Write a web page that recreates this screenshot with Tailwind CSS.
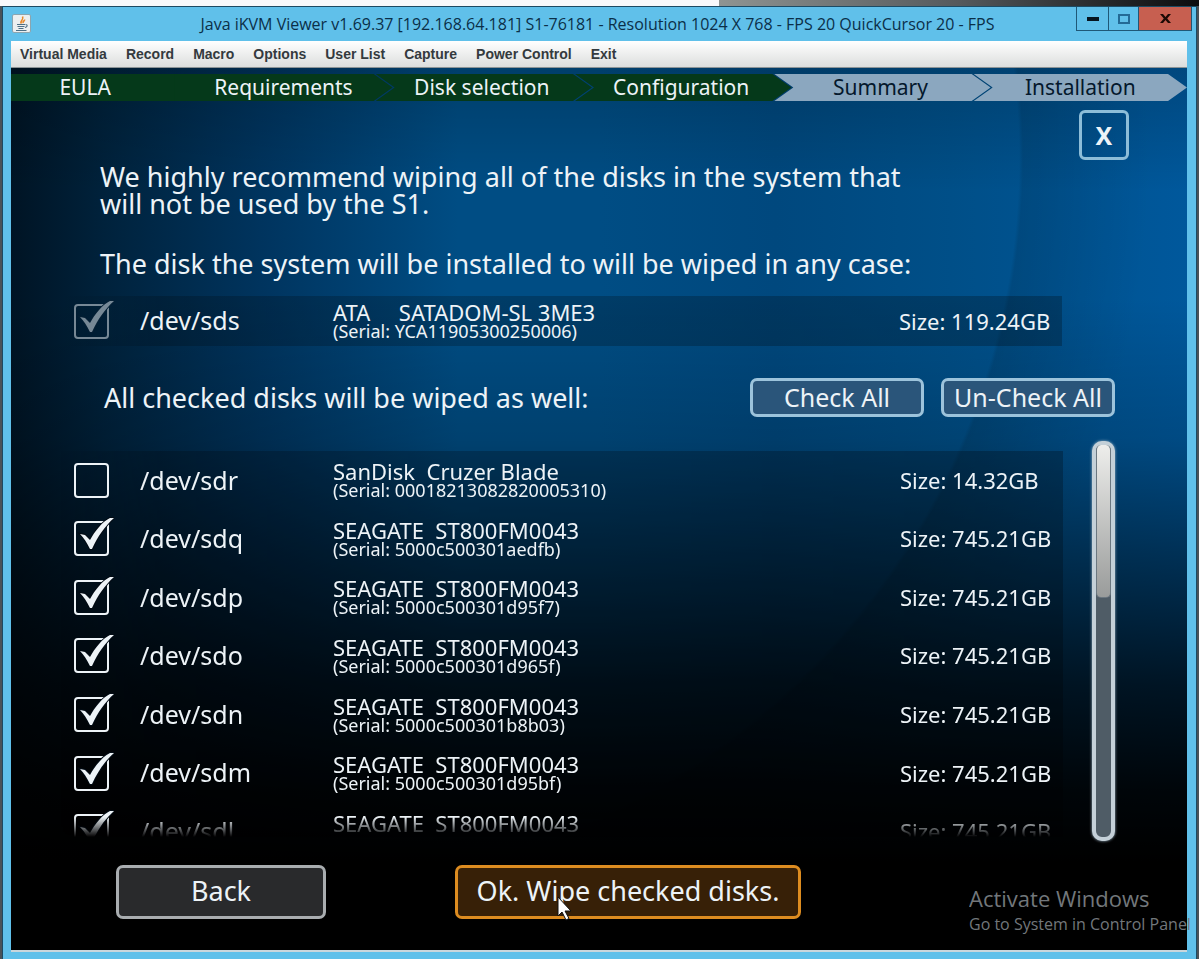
<!DOCTYPE html>
<html lang="en">
<head>
    <meta charset="UTF-8">
    <meta name="viewport" content="width=device-width, initial-scale=1.0">
    <title>Java iKVM Viewer</title>
    <script src="https://cdn.jsdelivr.net/npm/@tailwindcss/browser@4"></script>
</head>
<body class="flex min-h-screen flex-col overflow-hidden bg-[#4a5258] font-['Noto_Sans',sans-serif]">
    <!-- Desktop behind the window -->
    <div class="flex h-[6px] shrink-0">
        <div class="w-3/5 bg-[#f8f9fb]"></div>
        <div class="flex-1 bg-linear-to-r from-[#8f9492] via-[#55595c] to-[#0c0d0f]"></div>
    </div>

    <div class="relative ml-[2px] mr-[2px] flex flex-1 flex-col border-x border-t border-[#1c4a63] bg-[#60c0ea]">
        <!-- Title bar -->
        <header class="relative flex h-[34px] shrink-0 items-center justify-center pr-[4px]">
            <svg class="absolute left-[9px] top-[7px] size-[19px]" viewBox="0 0 19 19" aria-hidden="true">
                <rect x="0.5" y="0.5" width="18" height="18" rx="1.5" fill="#eceff0" stroke="#8ba5b0"/>
                <path d="M9.5 9.500c-2.500-2.500 3-3.500 1-7M11.500 9c-1.500-1.500 1.500-2 1-3.500" fill="none" stroke="#e8892b" stroke-width="1.600"/>
                <path d="M5 10.500h8M5.500 12.500h7M6.500 14.500h5M13.500 10.500c2.500 0 2 2.500-.5 3" fill="none" stroke="#4d6f85" stroke-width="1.100"/>
                <path d="M4 16.500h10.500" stroke="#4d6f85" stroke-width="1"/>
            </svg>
            <h1 class="whitespace-nowrap font-['Open_Sans',sans-serif] text-[16px] text-[#0b2f48]">Java iKVM Viewer v1.69.37 [192.168.64.181] S1-76181 - Resolution 1024 X 768 - FPS 20 QuickCursor 20 - FPS</h1>
            <div class="absolute right-[4px] top-0 flex h-[24px] border border-t-0 border-[#1f5877]">
                <button aria-label="Minimize" class="flex w-[31px] items-center justify-center">
                    <svg class="h-[4px] w-[12px]" viewBox="0 0 12 4"><rect width="12" height="4" fill="#06151f"/></svg>
                </button>
                <button aria-label="Maximize" class="flex w-[31px] items-center justify-center border-x border-[#1f5877]">
                    <svg class="h-[10px] w-[12px]" viewBox="0 0 12 10"><rect x="1" y="1" width="10" height="8" fill="none" stroke="#236a96" stroke-width="2"/></svg>
                </button>
                <button aria-label="Close" class="flex w-[52px] items-center justify-center bg-[#c75f50]">
                    <svg class="h-[9px] w-[11px]" viewBox="0 0 11 9"><path d="M0 0h3l2.500 3 2.500-3h3L7.200 4.500 11 9H8L5.500 6 3 9H0l3.800-4.500z" fill="#1c0a05"/></svg>
                </button>
            </div>
        </header>

        <div class="ml-[8px] mr-[9px] flex flex-1 flex-col">
            <!-- Menu -->
            <nav class="flex h-[27px] shrink-0 items-center gap-[19px] whitespace-nowrap border-b border-[#8d9496] bg-linear-to-b from-white to-[#dcdedd] px-[9px] font-['Liberation_Sans',sans-serif] text-[14px] font-bold text-[#343a3e]">
                <button>Virtual Media</button>
                <button>Record</button>
                <button>Macro</button>
                <button>Options</button>
                <button>User List</button>
                <button>Capture</button>
                <button>Power Control</button>
                <button>Exit</button>
            </nav>

            <!-- Remote screen -->
            <main class="relative flex flex-1 flex-col overflow-hidden bg-[linear-gradient(to_bottom,#00000030_0%,transparent_14%,transparent_26%,#00000028_42%,#00000078_56%,#000000c4_70%,#000000f0_82%,#000_90%),radial-gradient(circle_at_280px_90px,transparent_728px,#0000001c_732px,transparent_860px),linear-gradient(to_right,#001424_0%,#00223c_8%,#003560_22%,#004d84_38%,#004d84_50%,#00487e_65%,#004f88_80%,#00589c_100%)] pb-[31px] text-[#edf3f7]">
                <ol class="mt-[6px] grid h-[27px] shrink-0 grid-cols-[182fr_199fr_199fr_199fr_199fr_196fr] text-[21px] leading-[26px]">
                    <li class="bg-[#05391a] pr-[34px] text-center">EULA</li>
                    <li class="-ml-[19px] bg-[#05391a] text-center [clip-path:polygon(0_0,calc(100%-19px)_0,100%_50%,calc(100%-19px)_100%,0_100%)]">Requirements</li>
                    <li class="-ml-[17px] bg-[#05391a] pr-[4px] text-center [clip-path:polygon(0_0,calc(100%-19px)_0,100%_50%,calc(100%-19px)_100%,0_100%,19px_50%)]">Disk selection</li>
                    <li class="-ml-[17px] bg-[#05391a] pr-[4px] text-center [clip-path:polygon(0_0,calc(100%-19px)_0,100%_50%,calc(100%-19px)_100%,0_100%,19px_50%)]">Configuration</li>
                    <li class="-ml-[17px] bg-[#8ba7bf] pr-[4px] text-center text-[#04182c] [clip-path:polygon(0_0,calc(100%-19px)_0,100%_50%,calc(100%-19px)_100%,0_100%,19px_50%)]">Summary</li>
                    <li class="-ml-[17px] bg-[#8ba7bf] text-center text-[#04182c] [clip-path:polygon(0_0,calc(100%-19px)_0,100%_50%,calc(100%-19px)_100%,0_100%,19px_50%)]">Installation</li>
                </ol>

                <button class="mr-[58px] mt-[9px] size-[50px] self-end rounded-[6px] border-3 border-[#8dbdd8] text-[25px] font-bold leading-none">X</button>

                <section class="ml-[49px] mr-[72px] flex flex-col">
                    <p class="ml-[40px] mt-[3px] text-[27px] leading-[27px]">We highly recommend wiping all of the disks in the system that<br>will not be used by the S1.</p>
                    <p class="ml-[40px] mt-[33px] text-[27px] leading-[27px]">The disk the system will be installed to will be wiped in any case:</p>

                    <table class="mr-[53px] mt-[19px] h-[50px] table-fixed bg-linear-to-r from-transparent via-black/20 via-10% to-black/25 text-left">
                        <colgroup><col class="w-[80px]"><col class="w-[193px]"><col><col class="w-[163px]"></colgroup>
                        <tr>
                            <td class="pl-[14px]">
                                <label class="relative block size-[35px] opacity-50">
                                    <input type="checkbox" checked disabled aria-label="/dev/sds" class="peer block size-full appearance-none rounded-[4px] border-2 border-[#edf3f7]">
                                    <svg class="pointer-events-none absolute left-0 top-[-4px] hidden h-[39px] w-[40px] peer-checked:block" viewBox="0 0 40 39"><path d="M6 17 11 18 16 23C21 14 28 5 36 1L40 1C31 9 24 19 18 32H16C13 26 10 21 6 17z" fill="#edf3f7" stroke="#0a2236" stroke-width="2" paint-order="stroke"/></svg>
                                </label>
                            </td>
                            <td class="text-[25px]">/dev/sds</td>
                            <td><div class="whitespace-pre text-[22px] leading-[20px]">ATA     SATADOM-SL 3ME3</div><div class="text-[18px] leading-[18px]">(Serial: YCA11905300250006)</div></td>
                            <td class="text-[22px]">Size: 119.24GB</td>
                        </tr>
                    </table>

                    <div class="ml-[44px] mt-[32px] flex items-center gap-[17px]">
                        <p class="flex-1 text-[27px] leading-[27px]">All checked disks will be wiped as well:</p>
                        <button class="h-[39px] w-[174px] rounded-[7px] border-3 border-[#9cc3db] bg-[#2a557a] text-[25px] leading-none">Check All</button>
                        <button class="h-[39px] w-[174px] whitespace-nowrap rounded-[7px] border-3 border-[#9cc3db] bg-[#2a557a] text-[25px] leading-none">Un-Check All</button>
                    </div>

                    <div class="mt-[24px] flex h-[400px] justify-between">
                        <div class="mr-[29px] mt-[10px] h-[386px] flex-1 overflow-hidden bg-linear-to-r from-transparent via-black/20 via-10% to-black/25 [mask-image:linear-gradient(to_bottom,#000_calc(100%-20px),transparent)]">
                            <table id="disks" class="h-[410px] w-full table-fixed text-left">
                                <colgroup><col class="w-[80px]"><col class="w-[193px]"><col><col class="w-[163px]"></colgroup>
                                <tbody></tbody>
                            </table>
                        </div>
                        <div role="scrollbar" aria-controls="disks" aria-valuenow="0" class="w-[23px] rounded-[10px] border-4 border-[#c4d0d8] bg-[#4f5c66] shadow-[0_0_3px_#9fb8c8]">
                            <div class="h-[153px] rounded-[5px] border-x border-b border-[#6b7780] bg-linear-to-b from-[#eeeeec] to-[#9a9c9b]"></div>
                        </div>
                    </div>
                </section>

                <footer class="ml-[105px] mt-[24px] flex gap-[129px] text-[27px]">
                    <button class="h-[54px] w-[210px] rounded-[7px] border-3 border-[#a9adb0] bg-[#292a2c] pb-[4px] leading-none">Back</button>
                    <button class="h-[54px] w-[346px] whitespace-nowrap rounded-[7px] border-3 border-[#dd8c20] bg-[#372007] pb-[4px] leading-none">Ok. Wipe checked disks.</button>
                </footer>
            </main>
            <div class="mb-[7px] h-[2px] bg-[#c9d6dc]"></div>
        </div>

        <!-- Mouse pointer -->
        <svg class="pointer-events-none absolute left-[554px] top-[889px] h-[25px] w-[15px]" viewBox="0 0 15 25"><path d="M1 1v19l4-4 4 8 3-1.500-4-7.500h6z" fill="#fff" stroke="#111" stroke-width="1"/></svg>

        <!-- System watermark -->
        <div class="pointer-events-none absolute bottom-[23px] left-[966px] w-[222px] overflow-hidden whitespace-nowrap font-['Open_Sans',sans-serif] text-[#72777b]">
            <p class="text-[22px] leading-[28px]">Activate Windows</p>
            <p class="text-[16px] leading-[24px]">Go to System in Control Panel</p>
        </div>
    </div>

    <template id="diskRow">
        <tr>
            <td class="pl-[14px]">
                <label class="relative block size-[35px]">
                    <input type="checkbox" class="peer block size-full appearance-none rounded-[4px] border-2 border-[#edf3f7]">
                    <svg class="pointer-events-none absolute left-0 top-[-4px] hidden h-[39px] w-[40px] peer-checked:block" viewBox="0 0 40 39"><path d="M6 17 11 18 16 23C21 14 28 5 36 1L40 1C31 9 24 19 18 32H16C13 26 10 21 6 17z" fill="#edf3f7" stroke="#020b14" stroke-width="2" paint-order="stroke"/></svg>
                </label>
            </td>
            <td class="dev text-[25px]"></td>
            <td><div class="model whitespace-pre text-[22px] leading-[20px]"></div><div class="serial text-[18px] leading-[18px]"></div></td>
            <td class="size text-[22px]"></td>
        </tr>
    </template>

    <script>
        const disks = [
            { dev: '/dev/sdr', model: 'SanDisk  Cruzer Blade', serial: '00018213082820005310', size: '14.32GB', wipe: false },
            { dev: '/dev/sdq', model: 'SEAGATE  ST800FM0043', serial: '5000c500301aedfb', size: '745.21GB', wipe: true },
            { dev: '/dev/sdp', model: 'SEAGATE  ST800FM0043', serial: '5000c500301d95f7', size: '745.21GB', wipe: true },
            { dev: '/dev/sdo', model: 'SEAGATE  ST800FM0043', serial: '5000c500301d965f', size: '745.21GB', wipe: true },
            { dev: '/dev/sdn', model: 'SEAGATE  ST800FM0043', serial: '5000c500301b8b03', size: '745.21GB', wipe: true },
            { dev: '/dev/sdm', model: 'SEAGATE  ST800FM0043', serial: '5000c500301d95bf', size: '745.21GB', wipe: true },
            { dev: '/dev/sdl', model: 'SEAGATE  ST800FM0043', serial: '', size: '745.21GB', wipe: true }
        ];
        const body = document.querySelector('#disks tbody');
        const template = document.getElementById('diskRow');

        disks.forEach(disk => {
            const row = template.content.cloneNode(true);
            const box = row.querySelector('input');
            box.checked = disk.wipe;
            box.setAttribute('aria-label', disk.dev);
            row.querySelector('.dev').textContent = disk.dev;
            row.querySelector('.model').textContent = disk.model;
            row.querySelector('.serial').textContent = disk.serial ? `(Serial: ${disk.serial})` : '\u00a0';
            row.querySelector('.size').textContent = `Size: ${disk.size}`;
            body.appendChild(row);
        });
    </script>
</body>
</html>
